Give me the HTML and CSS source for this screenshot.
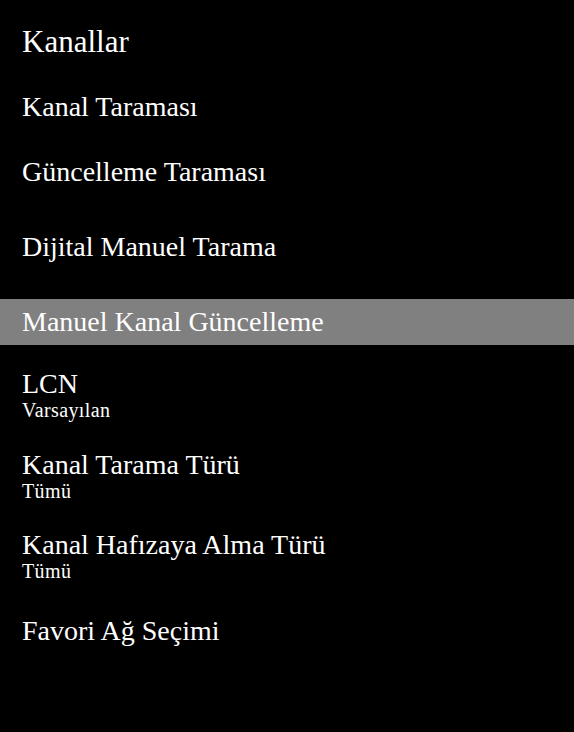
FILE: index.html
```html
<!DOCTYPE html>
<html lang="tr">
<head>
<meta charset="utf-8">
<link rel="stylesheet" href="styles.css">
</head>
<body>
<div class="screen">
  <div class="title">Kanallar</div>
  <ul class="menu">
    <li class="item">Kanal Taraması</li>
    <li class="item">Güncelleme Taraması</li>
    <li class="item item-wide">Dijital Manuel Tarama</li>
    <li class="item item-wide selected">Manuel Kanal Güncelleme</li>
    <li class="item double">
      <span class="label">LCN</span>
      <span class="value">Varsayılan</span>
    </li>
    <li class="item double">
      <span class="label">Kanal Tarama Türü</span>
      <span class="value">Tümü</span>
    </li>
    <li class="item double">
      <span class="label">Kanal Hafızaya Alma Türü</span>
      <span class="value">Tümü</span>
    </li>
    <li class="item item-last">Favori Ağ Seçimi</li>
  </ul>
</div>
</body>
</html>
```

FILE: styles.css
```css
html, body {
  margin: 0;
  padding: 0;
  background: #000;
}

.screen {
  width: 574px;
  height: 732px;
  background: #000;
  color: #fff;
  font-family: "Liberation Serif", "Times New Roman", serif;
}

.title {
  font-size: 31px;
  line-height: 34px;
  padding: 25px 22px 0;
}

.menu {
  list-style: none;
  margin: 0;
  padding: 0;
  margin-top: 25px;
  display: flex;
  flex-direction: column;
  gap: 18.5px;
}

.item {
  font-size: 28px;
  line-height: 46px;
  height: 46px;
  padding: 0 22px;
}

.item-wide {
  margin-top: 10.5px;
}

.item-last {
  margin-top: 3px;
}

.selected {
  background: #808080;
}

.double {
  height: auto;
  display: flex;
  flex-direction: column;
  padding-top: 6px;
  padding-bottom: 4px;
}

.label {
  line-height: 30px;
}

.value {
  font-size: 20px;
  line-height: 22px;
  letter-spacing: 0.4px;
}
```
